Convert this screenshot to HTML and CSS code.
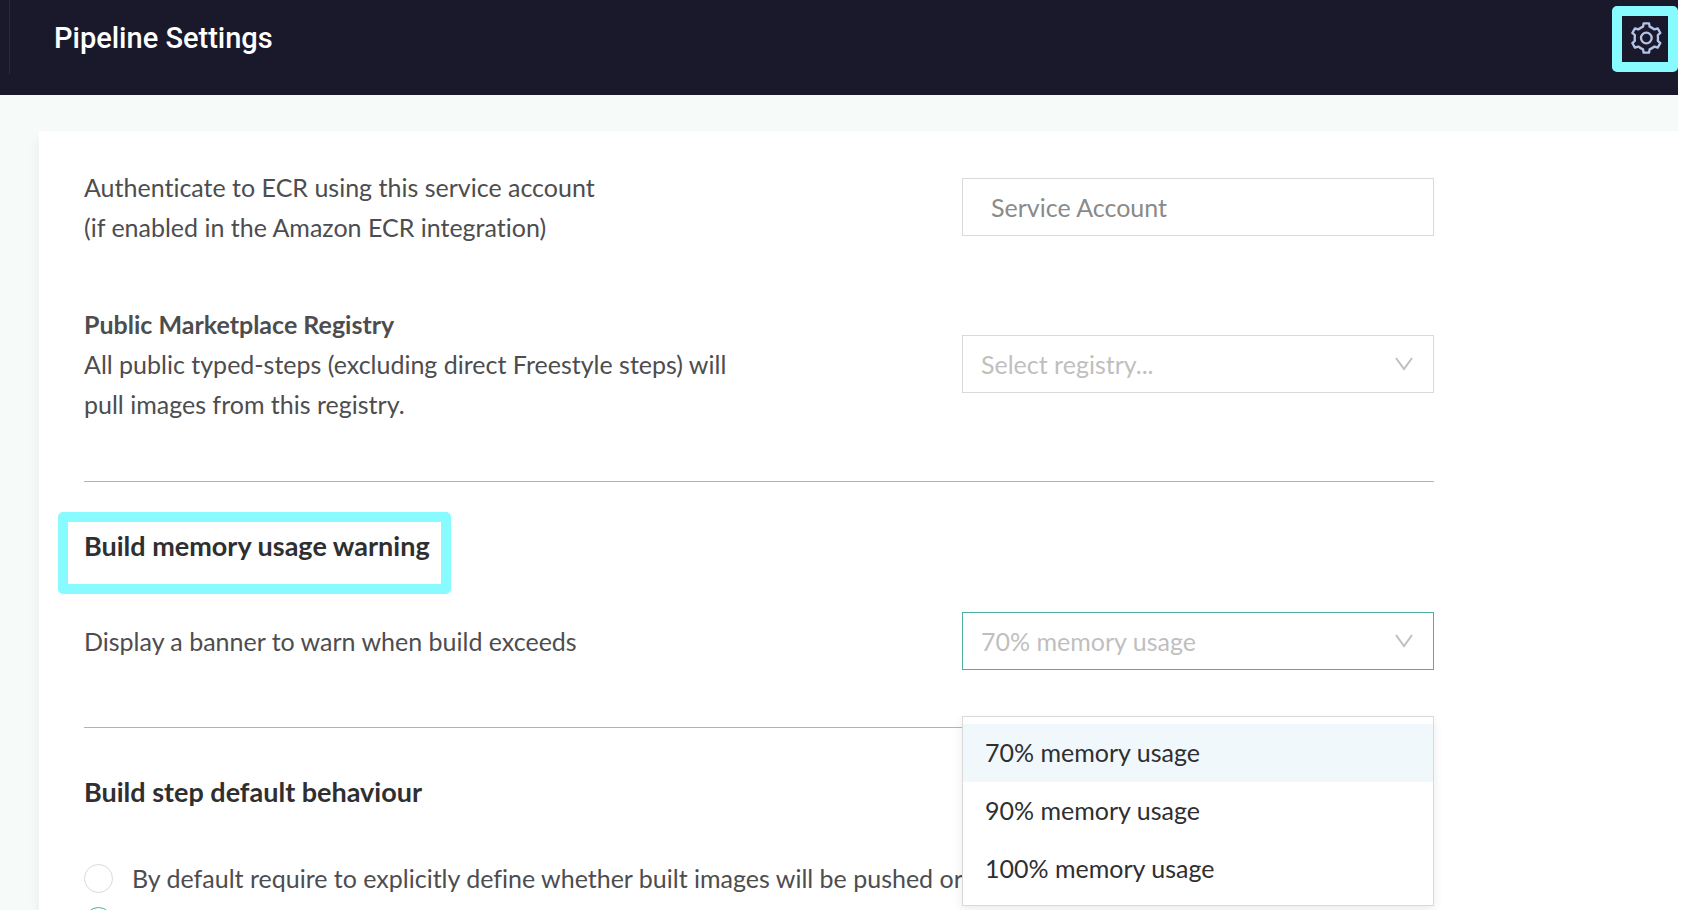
FILE: index.html
```html
<!DOCTYPE html>
<html lang="en">
<head>
<meta charset="utf-8">
<title>Pipeline Settings</title>
<link rel="stylesheet" href="styles.css">
</head>
<body>
<div class="app">
  <header class="topbar">
    <h1 class="topbar-title">Pipeline Settings</h1>
    <button class="settings-button" type="button" aria-label="Settings">
      <svg class="gear" viewBox="-52 -45 96 96" aria-hidden="true">
        <path d="M-8-44H8L10-34Q17-31 24.400-25.700L34.100-28.900 42.100-15.100 34.400-8.300Q35.500 0 34.400 8.300L42.100 15.100 34.100 28.900 24.400 25.700Q17 31 10 34L8 44H-8L-10 34Q-17 31-24.400 25.700L-34.100 28.900-42.100 15.100-34.400 8.300Q-35.500 0-34.400-8.300L-42.100-15.100-34.100-28.900-24.400-25.700Q-17-31-10-34Z"/>
        <circle cx="0" cy="0" r="16"/>
      </svg>
    </button>
  </header>
  <main class="page">
    <form class="card">
      <div class="content">
        <div class="row">
          <label class="row-text" for="service-account">Authenticate to ECR using this service account<br>(if enabled in the Amazon ECR integration)</label>
          <input class="control text-input" id="service-account" type="text" placeholder="Service Account">
        </div>
        <div class="row">
          <label class="row-text" for="registry"><strong>Public Marketplace Registry</strong><br>All public typed-steps (excluding direct Freestyle steps) will pull images from this registry.</label>
          <div class="select-wrap">
            <select class="control select" id="registry"><option>Select registry...</option></select>
            <svg class="chevron" viewBox="0 0 18 14" aria-hidden="true"><path d="M1 1l8 11 8-11"/></svg>
          </div>
        </div>
        <hr class="rule">
        <h2 class="section-title highlighted">Build memory usage warning</h2>
        <div class="row">
          <label class="row-text" for="memory">Display a banner to warn when build exceeds</label>
          <div class="select-wrap">
            <select class="control select select-open" id="memory"><option>70% memory usage</option></select>
            <svg class="chevron" viewBox="0 0 18 14" aria-hidden="true"><path d="M1 1l8 11 8-11"/></svg>
            <ul class="menu" role="listbox" aria-label="Memory usage">
              <li class="menu-item menu-item-active" role="option" aria-selected="true">70% memory usage</li>
              <li class="menu-item" role="option" aria-selected="false">90% memory usage</li>
              <li class="menu-item" role="option" aria-selected="false">100% memory usage</li>
            </ul>
          </div>
        </div>
        <hr class="rule">
        <h2 class="section-title">Build step default behaviour</h2>
        <div class="radios">
          <label class="radio-row"><input class="radio" type="radio" name="push">By default require to explicitly define whether built images will be pushed or</label>
          <label class="radio-row"><input class="radio" type="radio" name="push" aria-label="Push by default" checked></label>
        </div>
      </div>
    </form>
  </main>
</div>
</body>
</html>
```
FILE: styles.css
```css
* {
  box-sizing: border-box;
}

body {
  margin: 0;
  background: #fff;
  color: #4d4d4f;
  font: 25px/40px Lato, "Open Sans", sans-serif;
  font-variant-ligatures: none;
}

.app {
  display: flex;
  flex-direction: column;
  height: 100vh;
  overflow: hidden;
  padding-right: 6px;
}

.topbar {
  display: flex;
  flex: none;
  align-items: flex-start;
  justify-content: space-between;
  height: 95px;
  padding-left: 9px;
  background: #19192b;
}

.topbar-title {
  margin: 0;
  padding: 18px 0 16px 44px;
  border-left: 1px solid #2b2b3c;
  color: #fff;
  font: 500 29px/40px Roboto, sans-serif;
}

.settings-button {
  display: flex;
  align-items: center;
  justify-content: center;
  width: 66px;
  height: 66px;
  margin: 6px 0 0;
  padding: 0;
  border: 10px solid #87fbff;
  border-radius: 5px;
  background: #19192b;
}

.gear {
  width: 32px;
  height: 32px;
  overflow: visible;
  fill: none;
  stroke: #b3c3e8;
  stroke-width: 7;
  stroke-linejoin: round;
}

.page {
  flex: 1;
  min-height: 0;
  padding: 36px 0 0 39px;
  background: #f6faf9;
}

.card {
  min-height: 100%;
  margin-right: -6px;
  padding: 36px 45px;
  background: #fff;
  box-shadow: 0 8px 12px rgba(30, 70, 60, 0.06);
}

.content {
  max-width: 1350px;
}

.row {
  display: grid;
  grid-template-columns: minmax(0, 1fr) 472px;
  align-items: center;
  margin-bottom: 57px;
}

.row-text {
  max-width: 660px;
}

.control {
  display: block;
  width: 100%;
  height: 58px;
  margin: 0;
  border: 1px solid #d9d9d9;
  border-radius: 0;
  outline: 0;
  background: #fff;
  font: inherit;
}

.text-input {
  padding: 0 28px;
}

.text-input::placeholder {
  color: #8a8a8a;
  opacity: 1;
}

.select-wrap {
  position: relative;
}

.select {
  padding: 0 56px 0 18px;
  appearance: none;
  color: #bfbfbf;
}

.select-open {
  border-color: #4fae9f;
}

.chevron {
  position: absolute;
  top: 22px;
  right: 21px;
  width: 18px;
  height: 14px;
  fill: none;
  stroke: #bfbfbf;
  stroke-width: 2;
  pointer-events: none;
}

.rule {
  height: 1px;
  margin: 0 0 44px;
  border: 0;
  background: #b3b3b3;
}

.section-title {
  position: relative;
  width: fit-content;
  margin: 0 0 46px;
  color: #2f2f31;
  font-size: 27px;
  font-weight: 700;
  line-height: 40px;
}

.highlighted::after {
  position: absolute;
  inset: -14px -21px -28px -26px;
  border: 10px solid #87fbff;
  border-radius: 5px;
  content: "";
}

.menu {
  position: absolute;
  z-index: 1;
  top: 104px;
  left: 0;
  width: 100%;
  margin: 0;
  padding: 7px 0;
  border: 1px solid #d9d9d9;
  background: #fff;
  box-shadow: 0 4px 10px rgba(0, 0, 0, 0.08);
  color: #2f2f31;
  list-style: none;
}

.menu-item {
  padding: 8px 22px 10px;
}

.menu-item-active {
  background: #f0f8fc;
}

.radios {
  display: grid;
  gap: 3px;
}

.radio-row {
  display: flex;
  align-items: center;
  gap: 19px;
  min-height: 40px;
}

.radio {
  flex: none;
  width: 29px;
  height: 29px;
  margin: 0;
  border: 1px solid #d9d9d9;
  border-radius: 50%;
  appearance: none;
}

.radio:checked {
  border-color: #4fae9f;
}
```
